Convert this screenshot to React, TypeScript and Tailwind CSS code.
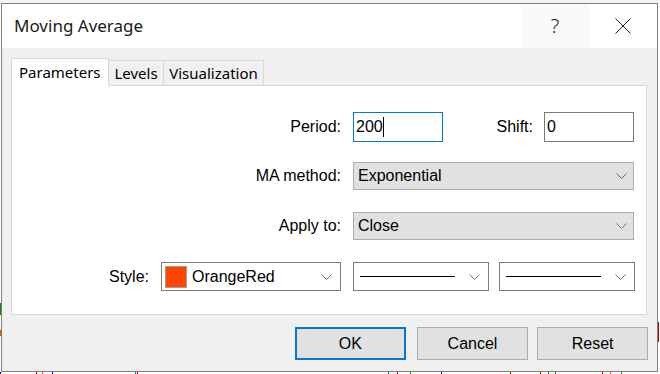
import React from 'react';

const ui = { fontFamily: '"Liberation Sans", Arial, sans-serif' };
const seg = { fontFamily: '"Noto Sans", "Open Sans", sans-serif' };

function Chevron() {
  return (
    <svg width="11" height="6" viewBox="0 0 11 6" className="shrink-0">
      <polyline points="0.5,0.5 5.5,5.5 10.5,0.5" fill="none" stroke="#6d6d6d" strokeWidth="1" />
    </svg>
  );
}

function Select({ label, width }: { label: string; width: string }) {
  return (
    <div className={`${width} h-[28px] border border-[#adadad] bg-[#e1e1e1] flex items-center pl-[4px] pr-[6px]`}>
      <span className="flex-1 text-[16px] text-black">{label}</span>
      <Chevron />
    </div>
  );
}

function LineSelect() {
  return (
    <div className="w-[136px] h-[29px] border border-[#7a7a7a] bg-white flex items-center pl-[6px] pr-[8px]">
      <div className="w-[95px] h-[1px] bg-black" />
      <div className="flex-1" />
      <Chevron />
    </div>
  );
}

// chart bits peeking out behind the dialog
const ticks: { x: number; y: number; h: number; c: string }[] = [
  { x: 0, y: 303, h: 12, c: '#0a8a0a' },
  { x: 0, y: 330, h: 6, c: '#ff4500' },
  { x: 0, y: 372, h: 2, c: '#00008b' },
  { x: 36, y: 372, h: 2, c: '#c00000' },
  { x: 42, y: 372, h: 2, c: '#ff4500' },
  { x: 52, y: 372, h: 2, c: '#00008b' },
  { x: 135, y: 372, h: 2, c: '#0a8a0a' },
  { x: 137, y: 372, h: 2, c: '#c00000' },
  { x: 388, y: 372, h: 2, c: '#0a8a0a' },
  { x: 397, y: 372, h: 2, c: '#c00000' },
  { x: 410, y: 372, h: 2, c: '#0a8a0a' },
  { x: 441, y: 372, h: 2, c: '#00008b' },
  { x: 510, y: 372, h: 2, c: '#c00000' },
  { x: 540, y: 372, h: 2, c: '#c00000' },
  { x: 548, y: 372, h: 2, c: '#0a8a0a' },
  { x: 555, y: 372, h: 2, c: '#0a8a0a' },
  { x: 602, y: 372, h: 2, c: '#c00000' },
  { x: 610, y: 372, h: 2, c: '#ff4500' },
  { x: 621, y: 372, h: 2, c: '#0a8a0a' },
  { x: 658, y: 322, h: 20, c: '#c00000' },
];

export default function App() {
  return (
    <div className="relative w-[660px] h-[374px] bg-white overflow-hidden" style={ui}>
      {ticks.map((t, i) => (
        <div
          key={i}
          className="absolute w-[1px]"
          style={{ left: t.x, top: t.y, height: t.h, background: t.c }}
        />
      ))}

      <div className="h-[3px] bg-[#f4f4f4]" />
      <div className="relative ml-[1px] w-[657px] h-[369px] border border-[#808080] bg-[#f0f0f0] flex flex-col">
        {/* title bar */}
        <div className="h-[44px] bg-white flex items-stretch">
          <div className="flex-1 flex items-center pl-[12px] text-[17px] text-[#1a1a1a]" style={seg}>
            Moving Average
          </div>
          <div className="w-[68px] bg-[#fafafa] flex items-center justify-center text-[20px] font-light text-[#1a1a1a]" style={seg}>
            ?
          </div>
          <div className="w-[68px] flex items-center justify-center">
            <svg width="16" height="16" viewBox="0 0 16 16">
              <path d="M0.5 0.5 L15.5 15.5 M15.5 0.5 L0.5 15.5" stroke="#1a1a1a" strokeWidth="1" fill="none" />
            </svg>
          </div>
        </div>

        {/* body */}
        <div className="flex-1 px-[9px] pt-[10px]">
          <div className="flex items-end h-[27px] text-[15px] text-black" style={seg}>
            <div className="relative z-10 -mb-px w-[98px] h-[28px] bg-white border border-b-0 border-[#d9d9d9] pl-[7px] pt-[2px]">
              Parameters
            </div>
            <div className="w-[55px] h-[25px] bg-[#f0f0f0] border border-l-0 border-b-0 border-[#d9d9d9] flex items-center justify-center">
              Levels
            </div>
            <div className="w-[100px] h-[25px] bg-[#f0f0f0] border border-l-0 border-b-0 border-[#d9d9d9] flex items-center justify-center">
              Visualization
            </div>
          </div>

          <div className="w-[636px] h-[230px] border border-[#d9d9d9] bg-white text-[16px] text-black">
            <div className="mt-[26px] flex items-center h-[30px]">
              <div className="w-[329px] text-right">Period:</div>
              <div className="ml-[12px] w-[90px] h-[30px] border border-[#0078d7] flex items-center pl-[2px]">
                200
                <span className="w-[1px] h-[20px] bg-black" />
              </div>
              <div className="w-[101px] text-right pr-[11px]">Shift:</div>
              <div className="w-[90px] h-[30px] border border-[#7a7a7a] flex items-center pl-[2px]">0</div>
            </div>

            <div className="mt-[20px] flex items-center">
              <div className="w-[329px] text-right">MA method:</div>
              <div className="ml-[12px]">
                <Select label="Exponential" width="w-[281px]" />
              </div>
            </div>

            <div className="mt-[22px] flex items-center">
              <div className="w-[329px] text-right">Apply to:</div>
              <div className="ml-[12px]">
                <Select label="Close" width="w-[281px]" />
              </div>
            </div>

            <div className="mt-[22px] flex items-center">
              <div className="w-[137px] text-right">Style:</div>
              <div className="ml-[12px] w-[180px] h-[29px] border border-[#7a7a7a] bg-white flex items-center pl-[3px] pr-[8px]">
                <div className="w-[22px] h-[22px] border border-[#9f9f9f] bg-[#ff4500]" />
                <span className="ml-[5px] flex-1">OrangeRed</span>
                <Chevron />
              </div>
              <div className="ml-[12px]">
                <LineSelect />
              </div>
              <div className="ml-[10px]">
                <LineSelect />
              </div>
            </div>
          </div>

          <div className="mt-[12px] flex items-center ml-[284px] text-[16px] text-black">
            <button className="w-[111px] h-[33px] border-2 border-[#0078d7] bg-[#e1e1e1]">OK</button>
            <button className="ml-[11px] w-[112px] h-[33px] border border-[#adadad] bg-[#e1e1e1]">Cancel</button>
            <button className="ml-[9px] w-[111px] h-[33px] border border-[#adadad] bg-[#e1e1e1]">Reset</button>
          </div>
        </div>
      </div>
    </div>
  );
}
